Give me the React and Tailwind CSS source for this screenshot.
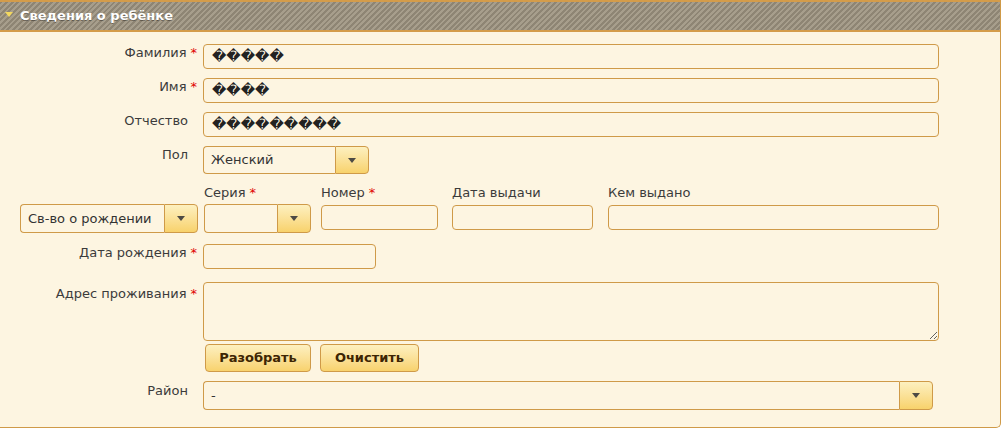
import React from 'react';

const font = { fontFamily: '"DejaVu Sans", "Liberation Sans", sans-serif' };

const Req = () => <span className="text-[#e00000] ml-[4px]">*</span>;

const Label = ({ children, req, className = '' }) => (
  <div className={`w-[197px] shrink-0 pr-[0px] text-right text-[13px] leading-[16px] text-[#3b3b3b] ${className}`}>
    {children}
    {req ? <Req /> : <span className="inline-block w-[9px]" />}
  </div>
);

const Arrow = () => (
  <svg width="8" height="5" viewBox="0 0 8 5">
    <path d="M0 0 H8 L4 5 Z" fill="#4d4a44" />
  </svg>
);

// fake combobox: text box + yellow arrow button
const Select = ({ value, className = '', h = 'h-[28px]' }) => (
  <div className={`flex ${h} ${className}`}>
    <div className="flex-1 min-w-0 border border-[#cf9a48] border-r-0 rounded-l-[4px] flex items-center pl-[7px] text-[13px] text-[#333] whitespace-nowrap overflow-hidden">
      {value}
    </div>
    <div className="w-[34px] shrink-0 border border-[#cf9a48] rounded-r-[4px] bg-gradient-to-b from-[#fdf0bf] to-[#f8d26b] flex items-center justify-center">
      <Arrow />
    </div>
  </div>
);

const Input = ({ value = '', className = '' }) => (
  <div className={`h-[25px] border border-[#cf9a48] rounded-[4px] flex items-center pl-[8px] text-[14px] text-[#222] ${className}`}>
    {value}
  </div>
);

const Btn = ({ children, className = '' }) => (
  <button className={`h-[28px] border border-[#cf9a48] rounded-[4px] bg-gradient-to-b from-[#fdf0c0] to-[#f8d26d] text-[13px] font-bold text-[#3d2503] ${className}`}>
    {children}
  </button>
);

export default function App() {
  return (
    <div style={font} className="w-[1001px] h-[432px] bg-white">
      <div className="h-[428px] bg-[#fdf5e1] border-r border-b border-[#cf9a48] rounded-br-[5px]">
        {/* header */}
        <div className="h-[32px] border-y-2 border-[#d49c4a] bg-[repeating-linear-gradient(135deg,#8e8574_0px,#8e8574_2px,#a79e8c_2px,#a79e8c_4px)] flex items-center pl-[5px]">
          <svg width="8" height="5" viewBox="0 0 8 5" className="mr-[7px] mb-[3px]">
            <path d="M0 0 H8 L4 5 Z" fill="#f3d860" />
          </svg>
          <span className="text-white font-bold text-[13px] [text-shadow:0_1px_0_rgba(0,0,0,0.35)]">Сведения о ребёнке</span>
        </div>

        <div className="pt-[12px]">
          <div className="flex">
            <Label req className="pt-[1px]">Фамилия</Label>
            <Input value="�����" className="ml-[6px] w-[736px]" />
          </div>
          <div className="flex mt-[9px]">
            <Label req className="pt-[1px]">Имя</Label>
            <Input value="����" className="ml-[6px] w-[736px]" />
          </div>
          <div className="flex mt-[9px]">
            <Label className="pt-[1px]">Отчество</Label>
            <Input value="���������" className="ml-[6px] w-[736px]" />
          </div>
          <div className="flex mt-[9px]">
            <Label className="pt-[1px]">Пол</Label>
            <Select value="Женский" className="ml-[6px] w-[166px]" />
          </div>

          <div className="flex mt-[11px]">
            <div className="w-[197px] shrink-0 pl-[20px] pt-[19px]">
              <Select value="Св-во о рождении" className="w-[178px]" h="h-[29px]" />
            </div>
            <div className="ml-[7px] w-[107px]">
              <div className="text-[13px] leading-[16px] h-[19px] text-[#3b3b3b]">Серия<Req /></div>
              <Select value="" className="w-[107px]" h="h-[29px]" />
            </div>
            <div className="ml-[10px] w-[117px]">
              <div className="text-[13px] leading-[16px] h-[19px] text-[#3b3b3b]">Номер<Req /></div>
              <Input className="w-[117px] mt-[1px]" />
            </div>
            <div className="ml-[14px] w-[141px]">
              <div className="text-[13px] leading-[16px] h-[19px] text-[#3b3b3b]">Дата выдачи</div>
              <Input className="w-[141px] mt-[1px]" />
            </div>
            <div className="ml-[15px] w-[331px]">
              <div className="text-[13px] leading-[16px] h-[19px] text-[#3b3b3b]">Кем выдано</div>
              <Input className="w-[331px] mt-[1px]" />
            </div>
          </div>

          <div className="flex mt-[11px]">
            <Label req className="pt-[1px]">Дата рождения</Label>
            <Input className="ml-[6px] w-[173px]" />
          </div>

          <div className="flex mt-[13px]">
            <Label req className="pt-[4px]">Адрес проживания</Label>
            <textarea className="ml-[6px] w-[736px] h-[59px] border border-[#cf9a48] rounded-[4px] bg-transparent outline-none block" />
          </div>
          <div className="flex gap-[9px] ml-[205px] mt-[3px]">
            <Btn className="w-[106px]">Разобрать</Btn>
            <Btn className="w-[99px]">Очистить</Btn>
          </div>

          <div className="flex mt-[9px]">
            <Label className="pt-[2px]">Район</Label>
            <Select value="-" className="ml-[6px] w-[730px]" h="h-[29px]" />
          </div>
        </div>
      </div>
    </div>
  );
}
